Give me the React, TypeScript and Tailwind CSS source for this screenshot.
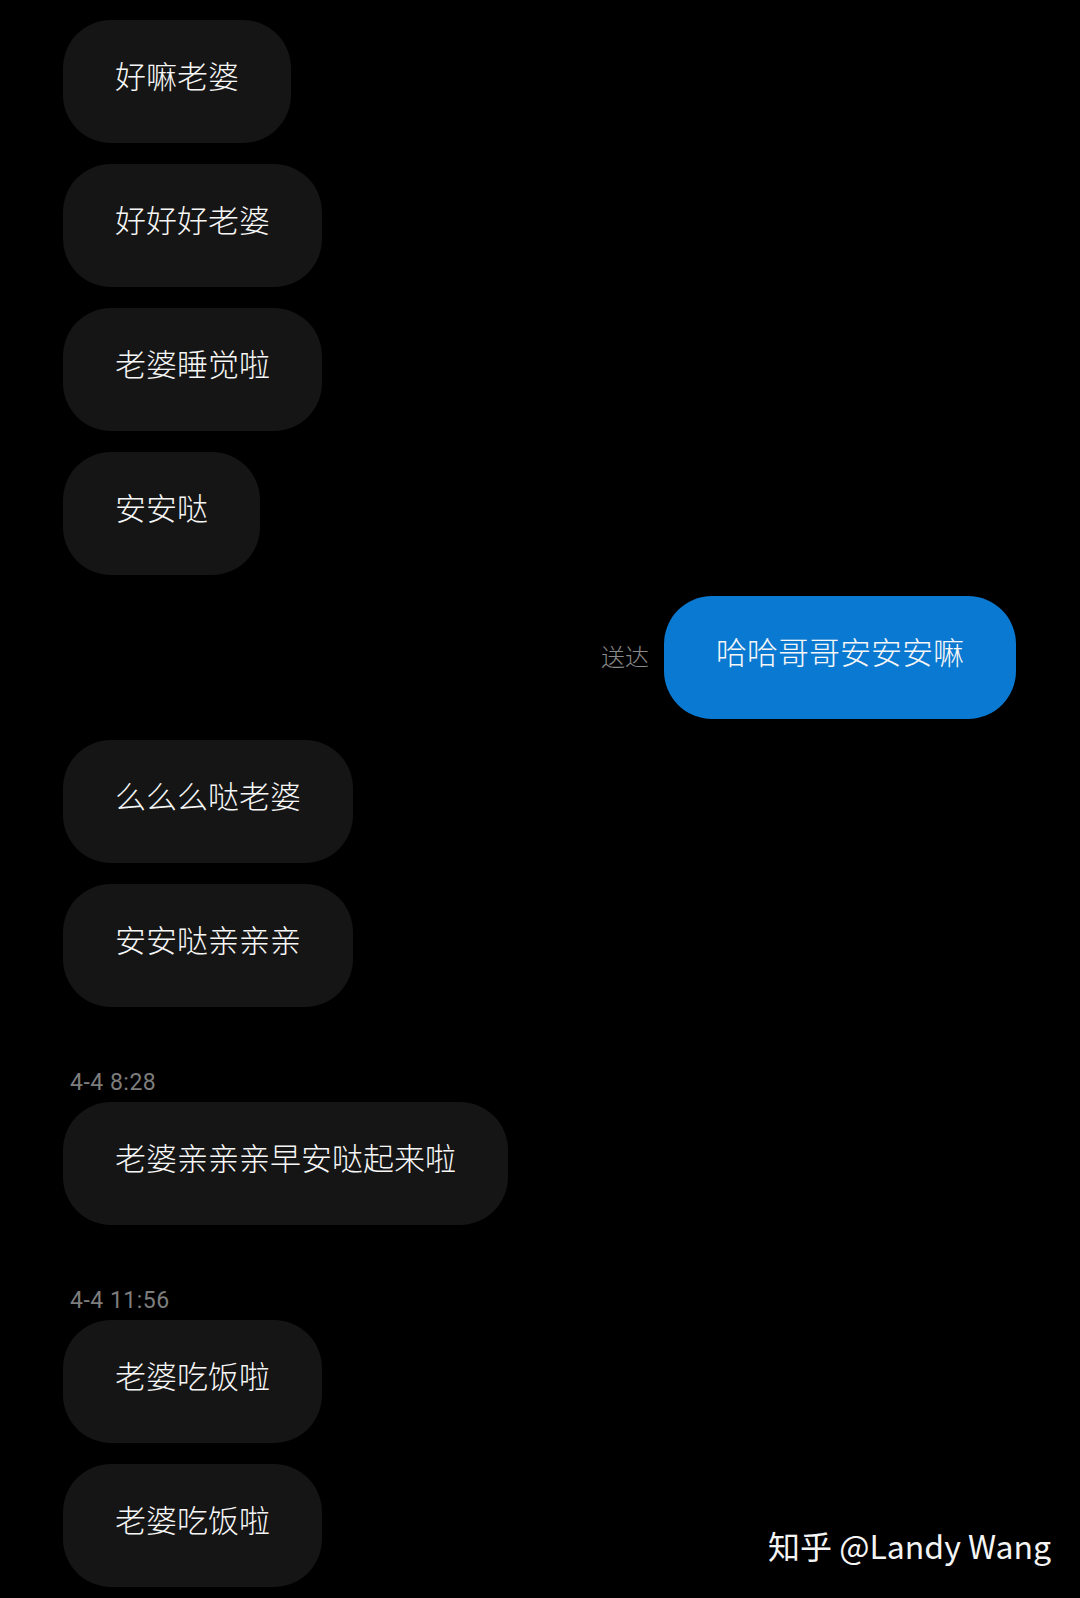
import React from 'react';

type Item =
  | { kind: 'in'; text: string }
  | { kind: 'out'; text: string; status: string }
  | { kind: 'time'; text: string };

const items: Item[] = [
  { kind: 'in', text: '好嘛老婆' },
  { kind: 'in', text: '好好好老婆' },
  { kind: 'in', text: '老婆睡觉啦' },
  { kind: 'in', text: '安安哒' },
  { kind: 'out', text: '哈哈哥哥安安安嘛', status: '送达' },
  { kind: 'in', text: '么么么哒老婆' },
  { kind: 'in', text: '安安哒亲亲亲' },
  { kind: 'time', text: '4-4 8:28' },
  { kind: 'in', text: '老婆亲亲亲早安哒起来啦' },
  { kind: 'time', text: '4-4 11:56' },
  { kind: 'in', text: '老婆吃饭啦' },
  { kind: 'in', text: '老婆吃饭啦' },
];

const cjk = { fontFamily: '"Noto Sans CJK SC", "Noto Sans", sans-serif' };

const Bubble: React.FC<{ text: string; mine?: boolean }> = ({ text, mine }) => (
  <div
    className={
      'h-[123px] px-[52px] rounded-[48px] flex items-center pb-[12px] text-[31px] font-light text-[#f7f7f7] whitespace-nowrap ' +
      (mine ? 'bg-[#0a79d1]' : 'bg-[#151515]')
    }
    style={cjk}
  >
    {text}
  </div>
);

export default function App() {
  return (
    <div className="w-[1080px] h-[1598px] bg-black overflow-hidden relative">
      <div className="flex flex-col items-start pt-[20px] pl-[63px] pr-[64px]">
        {items.map((it, i) => {
          if (it.kind === 'time') {
            return (
              <div
                key={i}
                className="mt-[64px] mb-[7px] ml-[7px] text-[23px] leading-[24px] tracking-[0.5px] text-[#7d7d7d]"
                style={{ fontFamily: 'Roboto, "Noto Sans", sans-serif' }}
              >
                {it.text}
              </div>
            );
          }
          const prevTime = i > 0 && items[i - 1].kind === 'time';
          const gap = i === 0 || prevTime ? '' : 'mt-[21px]';
          if (it.kind === 'out') {
            return (
              <div key={i} className={'self-stretch flex justify-end items-center gap-[15px] ' + gap}>
                <span className="text-[24px] text-[#8a8a8a] font-light pb-[4px]" style={cjk}>
                  {it.status}
                </span>
                <Bubble text={it.text} mine />
              </div>
            );
          }
          return (
            <div key={i} className={gap}>
              <Bubble text={it.text} />
            </div>
          );
        })}
      </div>
      <div
        className="absolute left-[768px] top-[1525px] text-[32px] leading-[40px] text-[#f4f4f4] whitespace-nowrap"
        style={cjk}
      >
        知乎 @Landy Wang
      </div>
    </div>
  );
}
